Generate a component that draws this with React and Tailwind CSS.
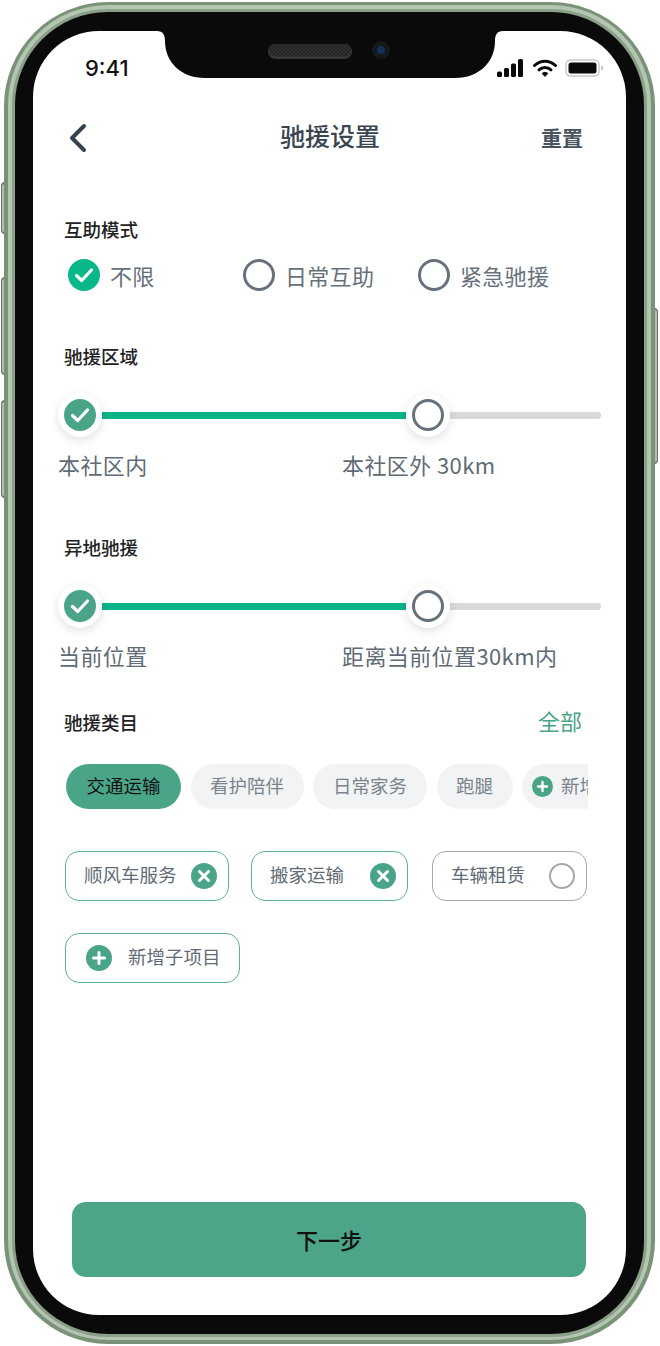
import React from 'react';

const font = { fontFamily: '"Noto Sans CJK SC", "Noto Sans", sans-serif' };

const CheckIcon = ({ size = 32, fill = '#4aa588' }) => (
  <svg width={size} height={size} viewBox="0 0 32 32" className="shrink-0">
    <circle cx="16" cy="16" r="16" fill={fill} />
    <path d="M8.5 16.5l5.2 5L23.5 11" fill="none" stroke="#fff" strokeWidth="3.2" strokeLinecap="round" strokeLinejoin="round" />
  </svg>
);

const RingIcon = ({ size = 32, color = '#66717c', width = 3 }) => (
  <svg width={size} height={size} viewBox="0 0 32 32" className="shrink-0">
    <circle cx="16" cy="16" r={16 - width / 2} fill="#fff" stroke={color} strokeWidth={width} />
  </svg>
);

const CloseIcon = () => (
  <svg width="26" height="26" viewBox="0 0 26 26" className="shrink-0">
    <circle cx="13" cy="13" r="13" fill="#4aa588" />
    <path d="M8.5 8.5l9 9M17.5 8.5l-9 9" stroke="#fff" strokeWidth="3" strokeLinecap="round" />
  </svg>
);

const PlusIcon = ({ size = 26 }) => (
  <svg width={size} height={size} viewBox="0 0 26 26" className="shrink-0">
    <circle cx="13" cy="13" r="13" fill="#4aa588" />
    <path d="M13 7.5v11M7.5 13h11" stroke="#fff" strokeWidth="3" strokeLinecap="round" />
  </svg>
);

const Notch = () => (
  <div className="absolute left-[124px] top-0">
    <svg width="346" height="47" viewBox="0 0 346 47" className="block">
      <defs>
        <pattern id="mesh" width="4" height="4" patternUnits="userSpaceOnUse">
          <rect width="4" height="4" fill="#222" />
          <rect width="2" height="2" fill="#303030" />
          <rect x="2" y="2" width="2" height="2" fill="#303030" />
        </pattern>
      </defs>
      <path d="M0 0H346C340 0 338 4 338 10C338 31 322 47 298 47H48C24 47 8 31 8 10C8 4 6 0 0 0Z" fill="#0a0a0a" />
      <rect x="111" y="13" width="84" height="15" rx="7.5" fill="#383838" />
      <rect x="112" y="13" width="82" height="12.5" rx="6" fill="url(#mesh)" />
      <circle cx="224" cy="19" r="9" fill="#15181d" />
      <circle cx="224" cy="19" r="4" fill="#12305a" />
    </svg>
  </div>
);

const StatusIcons = () => (
  <div className="flex items-center">
    <svg width="27" height="18" viewBox="0 0 27 18" className="block">
      <rect x="0" y="12.5" width="5" height="5.5" rx="1.5" fill="#0a0a0a" />
      <rect x="7" y="9" width="5" height="9" rx="1.5" fill="#0a0a0a" />
      <rect x="14" y="4.5" width="5" height="13.5" rx="1.5" fill="#0a0a0a" />
      <rect x="21" y="0" width="5" height="18" rx="1.5" fill="#0a0a0a" />
    </svg>
    <svg width="24" height="18" viewBox="0 0 24 18" className="ml-[9px] block">
      <path d="M1.5 6.5C7.5 0.8 16.5 0.8 22.5 6.5" fill="none" stroke="#0a0a0a" strokeWidth="3" strokeLinecap="round" />
      <path d="M6 10.8C9.5 7.6 14.5 7.6 18 10.8" fill="none" stroke="#0a0a0a" strokeWidth="3" strokeLinecap="round" />
      <path d="M9.2 14.4C11 13 13 13 14.8 14.4L12 17.5Z" fill="#0a0a0a" stroke="#0a0a0a" strokeLinejoin="round" />
    </svg>
    <svg width="39" height="18" viewBox="0 0 39 18" className="ml-[8px] block">
      <rect x="1" y="1" width="33" height="16" rx="4.5" fill="#fff" stroke="#c9c9c9" strokeWidth="1.5" />
      <rect x="3.5" y="3.5" width="28" height="11" rx="2.5" fill="#0a0a0a" />
      <path d="M36 6.5c1.6.5 2.4 1.3 2.4 2.5s-.8 2-2.4 2.5Z" fill="#c9c9c9" />
    </svg>
  </div>
);

const SectionTitle = ({ children, className }) => (
  <div className={`flex h-6 items-center text-[18.5px] leading-6 font-medium text-[#222] ${className}`}>{children}</div>
);

const Option = ({ label, checked, className }) => (
  <div className={`flex items-center ${className}`}>
    {checked ? <CheckIcon fill="#08b888" /> : <RingIcon />}
    <span className="ml-[10px] text-[22px] leading-8 tracking-[0.3px] text-[#66717c]">{label}</span>
  </div>
);

const Slider = ({ className }) => (
  <div className={`ml-[25px] flex h-11 items-center ${className}`}>
    <div className="z-10 flex size-11 shrink-0 items-center justify-center rounded-full bg-white shadow-[0_3px_10px_rgba(0,0,0,0.12)]">
      <CheckIcon />
    </div>
    <div className="h-[7px] w-[304px] bg-[#08b488]" />
    <div className="z-10 flex size-11 shrink-0 items-center justify-center rounded-full bg-white shadow-[0_3px_10px_rgba(0,0,0,0.12)]">
      <RingIcon />
    </div>
    <div className="h-[7px] w-[151px] rounded-r-full bg-[#d9d9d9]" />
  </div>
);

const RangeLabels = ({ left, right, className }) => (
  <div className={`ml-[25px] flex h-6 items-center text-[22px] leading-6 tracking-[0.4px] text-[#5f6b76] ${className}`}>
    <span className="w-[284px]">{left}</span>
    <span>{right}</span>
  </div>
);

const Pill = ({ children, width, active }) => (
  <div className={`flex h-[45px] ${width} shrink-0 items-center justify-center rounded-full pb-[2px] text-[18.5px] ${active ? 'bg-[#4aa588] text-[#111]' : 'bg-[#f2f3f5] text-[#7a838c]'}`}>
    {children}
  </div>
);

const Chip = ({ label, width, selected }) => (
  <div className={`flex h-[50px] ${width} items-center justify-between rounded-[14px] border-[1.5px] bg-white pr-[11px] pl-[18px] text-[18.5px] text-[#5f6b76] ${selected ? 'border-[#5fb094]' : 'border-[#a3a8ae]'}`}>
    <span className="-mt-[2px]">{label}</span>
    {selected ? <CloseIcon /> : <RingIcon size={26} color="#a3a8ae" width={2.5} />}
  </div>
);

export default function App() {
  return (
    <div className="relative h-[1346px] w-[660px] overflow-hidden bg-white" style={font}>
      {/* side buttons */}
      <div className="absolute top-[182px] left-[1px] h-[52px] w-1 rounded-l-sm border-y-2 border-l border-[#6f716e] bg-[#b8bbb6]" />
      <div className="absolute top-[277px] left-[1px] h-[98px] w-1 rounded-l-sm border-y-2 border-l border-[#6f716e] bg-[#b8bbb6]" />
      <div className="absolute top-[400px] left-[1px] h-[98px] w-1 rounded-l-sm border-y-2 border-l border-[#6f716e] bg-[#b8bbb6]" />
      <div className="absolute top-[308px] left-[654px] h-[156px] w-1 rounded-r-sm border-y-2 border-r border-[#6f716e] bg-[#b8bbb6]" />

      {/* phone body */}
      <div className="absolute top-[2px] left-[4px] h-[1342px] w-[651px] rounded-[104px] bg-[#7a9378] px-1 pt-[3px] pb-1">
        <div className="h-full rounded-[100px] bg-[#b4c5b2] px-1 pt-1 pb-[3px]">
          <div className="h-full rounded-[96px] bg-[#8aa088] p-[3px]">
            <div className="h-full rounded-[93px] bg-[#0a0a0a] px-[18px] py-[19px]">
              <div className="relative flex h-full flex-col overflow-hidden rounded-[66px] bg-white">
                <Notch />

                <div className="flex h-[74px] shrink-0 items-center justify-between pr-[22px] pl-[52px]">
                  <span className="text-[22px] font-medium text-[#111]" style={{ fontFamily: 'Inter, sans-serif' }}>9:41</span>
                  <StatusIcons />
                </div>

                <div className="grid h-[65px] shrink-0 grid-cols-[212px_100px_1fr] items-center pr-[43px] pl-[35px]">
                  <svg width="20" height="30" viewBox="0 0 20 30" className="block">
                    <path d="M16 3L4 15l12 12" fill="none" stroke="#35424f" strokeWidth="4" strokeLinecap="round" strokeLinejoin="round" />
                  </svg>
                  <span className="-mt-[3px] text-[25px] font-medium text-[#3b4550]">驰援设置</span>
                  <span className="justify-self-end text-[21px] font-bold text-[#4a545e]">重置</span>
                </div>

                <SectionTitle className="mt-[47px] ml-[31px]">互助模式</SectionTitle>
                <div className="mt-[18px] ml-[35px] flex">
                  <Option label="不限" checked className="w-[175px]" />
                  <Option label="日常互助" className="w-[175px]" />
                  <Option label="紧急驰援" />
                </div>

                <SectionTitle className="mt-[53px] ml-[31px]">驰援区域</SectionTitle>
                <Slider className="mt-[25px]" />
                <RangeLabels className="mt-[15px]" left="本社区内" right="本社区外 30km" />

                <SectionTitle className="mt-[59px] ml-[31px]">异地驰援</SectionTitle>
                <Slider className="mt-[25px]" />
                <RangeLabels className="mt-[15px]" left="当前位置" right="距离当前位置30km内" />

                <div className="mt-[43px] ml-[31px] flex h-6 items-center justify-between pr-[44px]">
                  <SectionTitle>驰援类目</SectionTitle>
                  <span className="mb-1 text-[22px] text-[#4aa588]">全部</span>
                </div>

                <div className="mt-[30px] ml-[33px] flex w-[522px] gap-[9.5px] overflow-hidden">
                  <Pill width="w-[115px]" active>交通运输</Pill>
                  <Pill width="w-[113px]">看护陪伴</Pill>
                  <Pill width="w-[114px]">日常家务</Pill>
                  <Pill width="w-[76px]">跑腿</Pill>
                  <div className="flex h-[45px] shrink-0 items-center gap-2 rounded-full bg-[#f2f3f5] pr-5 pl-[10px] text-[18.5px] text-[#7a838c]">
                    <PlusIcon size={21} />
                    <span className="-mt-[2px]">新增</span>
                  </div>
                </div>

                <div className="mt-[42px] ml-[32px] flex">
                  <Chip label="顺风车服务" width="w-[164px]" selected />
                  <div className="w-[22px]" />
                  <Chip label="搬家运输" width="w-[157px]" selected />
                  <div className="w-[24px]" />
                  <Chip label="车辆租赁" width="w-[155px]" />
                </div>

                <div className="mt-[32px] ml-[32px] flex h-[50px] w-[175px] items-center gap-4 rounded-[14px] border-[1.5px] border-[#5fb094] pl-[20px] text-[18.5px] text-[#5f6b76]">
                  <PlusIcon />
                  <span className="-mt-[2px]">新增子项目</span>
                </div>

                <button className="mt-auto mb-[38px] ml-[39px] flex h-[75px] w-[514px] shrink-0 items-center justify-center rounded-[14px] bg-[#4ca589] text-[22px] font-medium text-[#111]">
                  下一步
                </button>
              </div>
            </div>
          </div>
        </div>
      </div>
    </div>
  );
}
